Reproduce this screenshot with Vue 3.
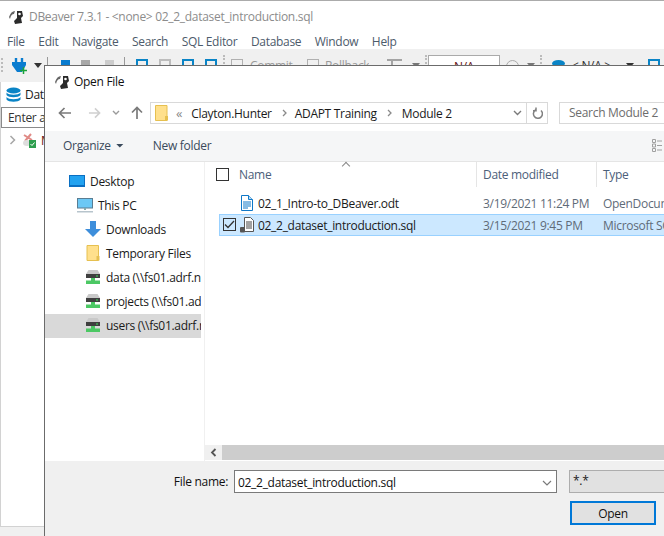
<script setup>
const menus = ['File', 'Edit', 'Navigate', 'Search', 'SQL Editor', 'Database', 'Window', 'Help']

// toolbar items after the connection plug, gap = space before the item
const tools = [
  { kind: 'caret', gap: 6 },
  { kind: 'sep', gap: 5 },
  { kind: 'plug blue', gap: 13 },
  { kind: 'plug grey', gap: 11 },
  { kind: 'plug pale', gap: 15 },
  { kind: 'sep', gap: 10 },
  { kind: 'sheet blue', gap: 11 },
  { kind: 'sheet grey', gap: 11 },
  { kind: 'sheet blue', gap: 11 },
  { kind: 'sheet blue', gap: 11 },
  { kind: 'grip', gap: 6 },
  { kind: 'sheet thin', gap: 6 },
  { kind: 'label commit', gap: 7, text: 'Commit' },
  { kind: 'sheet thin', gap: 13 },
  { kind: 'label rollback', gap: 6, text: 'Rollback' },
  { kind: 'type-t', gap: 18 },
  { kind: 'caret grey', gap: 10 },
  { kind: 'grip', gap: 5 },
  { kind: 'na-box', gap: 1, text: 'N/A' },
  { kind: 'clock', gap: 6 },
  { kind: 'caret grey', gap: 8 },
  { kind: 'grip', gap: 5 },
  { kind: 'db-dot', gap: 10 },
  { kind: 'tool-na', gap: 7, text: '< N/A >' },
  { kind: 'caret', gap: 14 },
  { kind: 'sheet blue', gap: 14 }
]

const places = [
  { label: 'Desktop', icon: 'desktop', indent: 24 },
  { label: 'This PC', icon: 'pc', indent: 32 },
  { label: 'Downloads', icon: 'download', indent: 40 },
  { label: 'Temporary Files', icon: 'folder', indent: 40 },
  { label: 'data (\\\\fs01.adrf.net)', icon: 'drive', indent: 40 },
  { label: 'projects (\\\\fs01.adrf.net)', icon: 'drive', indent: 40 },
  { label: 'users (\\\\fs01.adrf.net)', icon: 'drive', indent: 40, active: true }
]

const files = [
  { name: '02_1_Intro-to_DBeaver.odt', date: '3/19/2021 11:24 PM', type: 'OpenDocument Text', icon: 'odt' },
  { name: '02_2_dataset_introduction.sql', date: '3/15/2021 9:45 PM', type: 'Microsoft SQL Server', icon: 'sql', selected: true }
]
</script>

<template>
  <div class="screen">
    <!-- main window behind the dialog -->
    <div class="titlebar">
      <svg class="beaver" width="16" height="16" viewBox="0 0 16 16">
        <path d="M1 8 Q3 2 7 2 L6 5 Q3 5 2 10Z" fill="#666" />
        <path d="M9 2 L14 2 L15 7 L13 9 L14 14 L7 15 L6 12 L9 9Z" fill="#2b2b2b" />
        <circle cx="11.500" cy="5" r="1.300" fill="#fff" />
      </svg>
      <span>DBeaver 7.3.1 - &lt;none&gt; 02_2_dataset_introduction.sql</span>
    </div>
    <div class="menubar">
      <span v-for="m in menus" :key="m">{{ m }}</span>
    </div>
    <div class="toolbar">
      <span class="grip first"></span>
      <svg class="tool-plug" width="16" height="16" viewBox="0 0 16 16">
        <path d="M4 0v5M10 0v5" stroke="#0a7ccf" stroke-width="2.400" />
        <path d="M0 4h14v3l-4 7H5L0 7z" fill="#0a7ccf" />
        <path d="M11.500 9v7M8 12.500h7" stroke="#1aa33a" stroke-width="1.500" />
      </svg>
      <span
        v-for="(t, i) in tools"
        :key="i"
        class="tool"
        :class="t.kind"
        :style="{ marginLeft: t.gap + 'px' }"
      >{{ t.text }}</span>
    </div>
    <div class="workspace">
      <aside class="db-panel">
        <div class="db-tab">
          <svg width="15" height="16" viewBox="0 0 15 16">
            <ellipse cx="7.500" cy="3.500" rx="7" ry="3" fill="#0a84c6" />
            <path d="M.5 5.500c2 3 12 3 14 0v2.500c-2 3-12 3-14 0zM.5 10c2 3 12 3 14 0v2.500c-2 3-12 3-14 0z" fill="#0a84c6" />
          </svg>
          <span>Databases</span>
        </div>
        <div class="db-filter">Enter a part of name</div>
        <div class="db-node">
          <svg width="8" height="10" viewBox="0 0 8 10"><path d="M1.500 1l4 4-4 4" fill="none" stroke="#a6a6a6" stroke-width="1.500" /></svg>
          <svg width="14" height="15" viewBox="0 0 14 15">
            <path d="M2 2l8 5M9 1L3 8" stroke="#e08a86" stroke-width="2" />
            <ellipse cx="5" cy="10" rx="4" ry="3" fill="#ddd" />
            <rect x="7" y="7" width="7" height="8" fill="#2e9e4f" />
            <path d="M8.500 11l1.500 1.500 2.500-3" fill="none" stroke="#fff" />
          </svg>
          <span>MySQL</span>
        </div>
      </aside>
    </div>

    <!-- Open File dialog -->
    <section class="dialog">
      <header class="dlg-title">
        <svg width="16" height="16" viewBox="0 0 16 16">
          <path d="M1 8 Q3 2 7 2 L6 5 Q3 5 2 10Z" fill="#666" />
          <path d="M9 2 L14 2 L15 7 L13 9 L14 14 L7 15 L6 12 L9 9Z" fill="#2b2b2b" />
          <circle cx="11.500" cy="5" r="1.300" fill="#fff" />
        </svg>
        <span>Open File</span>
      </header>

      <div class="nav-row">
        <svg class="nav-arrow" width="14" height="12" viewBox="0 0 14 12"><path d="M13 6H2M6.500 1L1.500 6l5 5" fill="none" stroke="#7a7a7a" stroke-width="1.700" /></svg>
        <svg class="nav-arrow fwd" width="14" height="12" viewBox="0 0 14 12"><path d="M1 6h11M7.500 1l5 5-5 5" fill="none" stroke="#cfcfcf" stroke-width="1.700" /></svg>
        <svg class="nav-down" width="8" height="6" viewBox="0 0 8 6"><path d="M1 1l3 3 3-3" fill="none" stroke="#9a9a9a" stroke-width="1.400" /></svg>
        <svg class="nav-arrow up" width="12" height="14" viewBox="0 0 12 14"><path d="M6 13V2M1 6.500l5-5 5 5" fill="none" stroke="#7a7a7a" stroke-width="1.700" /></svg>
        <div class="address">
          <svg class="addr-folder" width="13" height="16" viewBox="0 0 13 16"><path d="M.5.500h11.500v15H.5z" fill="#ffe08c" stroke="#e6c050" /><path d="M10 11h3v4.500h-3z" fill="#e6c050" /></svg>
          <span class="chev-dbl">«</span>
          <span class="crumb-text">Clayton.Hunter</span>
          <svg class="crumb" width="6" height="8" viewBox="0 0 6 8"><path d="M1 1l3 3-3 3" fill="none" stroke="#8a8a8a" stroke-width="1.300" /></svg>
          <span class="crumb-text">ADAPT Training</span>
          <svg class="crumb last" width="6" height="8" viewBox="0 0 6 8"><path d="M1 1l3 3-3 3" fill="none" stroke="#8a8a8a" stroke-width="1.300" /></svg>
          <span class="crumb-text">Module 2</span>
          <svg class="addr-down" width="9" height="6" viewBox="0 0 9 6"><path d="M1 1l3.500 3.500L8 1" fill="none" stroke="#7a7a7a" stroke-width="1.400" /></svg>
          <span class="refresh">
            <svg width="11" height="12" viewBox="0 0 11 12"><path d="M3 2.500A4.500 4.500 0 1 0 8.500 3M3.500 0v3.300H0.500" fill="none" stroke="#808080" stroke-width="1.500" transform="translate(.5 .5)" /></svg>
          </span>
        </div>
        <div class="search">Search Module 2</div>
      </div>

      <div class="cmd-bar">
        <span class="organize">Organize</span>
        <span class="org-caret"></span>
        <span class="new-folder">New folder</span>
        <svg class="view-icon" width="10" height="13" viewBox="0 0 10 13"><path d="M.5.500h3v3h-3zM.5 5h3v3h-3zM.5 9.500h3v3h-3z" fill="none" stroke="#a0a0a0" /><path d="M5 2h5M5 6.500h5M5 11h5" stroke="#a0a0a0" /></svg>
      </div>

      <div class="browser">
        <nav class="places">
          <div v-for="p in places" :key="p.label" class="place" :class="{ active: p.active }" :style="{ paddingLeft: p.indent + 'px' }">
            <svg v-if="p.icon === 'desktop'" width="16" height="12" viewBox="0 0 16 12"><rect width="16" height="12" fill="#0a6fc2" /><rect x="1" y="1" width="14" height="9" fill="#22a2f0" /></svg>
            <svg v-else-if="p.icon === 'pc'" width="16" height="15" viewBox="0 0 16 15"><rect x=".5" y=".5" width="15" height="9.500" fill="#6cc8f5" stroke="#5a7d92" /><path d="M7 10h2v2H7z" fill="#8aa" /><path d="M0 13h16v1.500H0z" fill="#b7c4cc" /></svg>
            <svg v-else-if="p.icon === 'download'" width="16" height="16" viewBox="0 0 16 16"><path d="M5 0h6v8h5l-8 8-8-8h5z" fill="#3d8edb" /></svg>
            <svg v-else-if="p.icon === 'folder'" width="13" height="16" viewBox="0 0 13 16"><path d="M.5.500h11.500v15H.5z" fill="#ffe08c" stroke="#e6c050" /><path d="M10 11h3v4.500h-3z" fill="#e6c050" /></svg>
            <svg v-else class="drive" width="14" height="14" viewBox="0 0 14 14"><path d="M2.500 0h9L14 4H0z" fill="#c9c9c9" /><rect y="4" width="14" height="4" fill="#3f3f3f" /><rect x="10" y="5.500" width="2" height="1" fill="#3fe05c" /><path d="M5 8h4v2.500h5V14H0v-3.500h5z" fill="#4cc864" /></svg>
            <span class="place-label">{{ p.label }}</span>
          </div>
        </nav>

        <div class="listing">
          <div class="list-head">
            <span class="sort-caret"></span>
            <span class="col-name"><i class="check"></i><b>Name</b></span>
            <span class="col-date"><b>Date modified</b></span>
            <span class="col-type"><b>Type</b></span>
          </div>
          <div class="rows">
            <div v-for="f in files" :key="f.name" class="file-row" :class="{ selected: f.selected }">
              <span class="cell-name">
                <i v-if="f.selected" class="check on">
                  <svg width="11" height="9" viewBox="0 0 11 9"><path d="M1 4.500l3 3 6-6.500" fill="none" stroke="#333" stroke-width="1.300" /></svg>
                </i>
                <svg v-if="f.icon === 'odt'" class="file-icon odt" width="12" height="16" viewBox="0 0 12 16"><path d="M.5.500h7l4 4v11H.5z" fill="#fff" stroke="#0f78c8" /><path d="M7.500.5v4h4" fill="#bcdcf4" stroke="#0f78c8" /><path d="M2 7h8M2 9h8M2 11h8M2 13h5" stroke="#0f78c8" /></svg>
                <svg v-else class="file-icon sql" width="14" height="16" viewBox="0 0 14 16"><path d="M4.500.500h6l3 3v11h-9z" fill="#fff" stroke="#555" /><path d="M6 5h6M6 7h6M6 9h6M6 11h6" stroke="#444" /><rect y="10" width="5" height="5.500" rx="1" fill="#555" /></svg>
                <span class="file-name">{{ f.name }}</span>
              </span>
              <span class="cell-date">{{ f.date }}</span>
              <span class="cell-type">{{ f.type }}</span>
            </div>
          </div>
          <div class="hscroll">
            <span class="hs-btn">
              <svg width="7" height="9" viewBox="0 0 7 9"><path d="M5.500 1L2 4.500 5.500 8" fill="none" stroke="#555" stroke-width="1.800" /></svg>
            </span>
            <span class="hs-thumb"></span>
          </div>
        </div>
      </div>

      <footer class="dlg-foot">
        <div class="foot-row">
          <label>File name:</label>
          <div class="name-input">
            <span>02_2_dataset_introduction.sql</span>
            <svg width="10" height="6" viewBox="0 0 10 6"><path d="M1 1l4 4 4-4" fill="none" stroke="#7a7a7a" stroke-width="1.200" /></svg>
          </div>
          <div class="filter-box">*.*</div>
        </div>
        <div class="foot-actions">
          <button class="open-btn">Open</button>
        </div>
      </footer>
    </section>
  </div>
</template>

<style>
html, body { margin: 0; overflow: hidden; }
</style>

<style scoped>
.screen {
  position: relative;
  width: 664px;
  height: 536px;
  overflow: hidden;
  background: #f0f0f0;
  font-family: "Open Sans", "Noto Sans", sans-serif;
  font-size: 12px;
  letter-spacing: -0.3px;
  color: #1a1a1a;
  box-sizing: border-box;
  border-top: 1px solid #ababab;
}

.titlebar {
  height: 31px;
  background: #fff;
  display: flex;
  align-items: center;
  gap: 5px;
  padding-left: 8px;
  color: #8c8c8c;
}

.menubar {
  height: 17px;
  padding-top: 1px;
  margin-bottom: -1px;
  background: #fff;
  display: flex;
  align-items: center;
  gap: 13.500px;
  padding-left: 7px;
  color: #4d5b6b;
}

.toolbar {
  height: 33px;
  background: #f0f0f0;
  display: flex;
  align-items: flex-start;
  padding-left: 1px;
  overflow: hidden;
  white-space: nowrap;
  color: #9a9a9a;
}

.tool { flex: none; display: block; box-sizing: border-box; }

.grip {
  flex: none;
  width: 2px;
  height: 9px;
  margin-top: 6px;
  border-left: 2px dotted #bbb;
}
.grip.first { height: 14px; margin-top: 9px; }

.tool-plug { flex: none; margin: 9px 0 0 7px; }

.caret {
  width: 8px;
  height: 5px;
  margin-top: 14px;
  background: #333;
  clip-path: polygon(0 0, 100% 0, 50% 100%);
}
.caret.grey { background: #777; }

.sep { width: 1px; height: 24px; margin-top: 8px; background: #999; }

.plug { width: 9px; height: 13px; margin-top: 11px; border-radius: 0 0 4px 4px; }
.plug.blue { background: #0a7ccf; }
.plug.grey { background: #a8a8a8; }
.plug.pale { background: #ccc; }

.sheet { width: 12px; height: 14px; margin-top: 10px; border: 2px solid; }
.sheet.blue { border-color: #0a84c6; }
.sheet.grey { border-color: #bdbdbd; }
.sheet.thin { border: 1px solid #b0b0b0; }

.label { margin-top: 9px; width: 44px; line-height: 16px; overflow: hidden; }

.type-t { position: relative; width: 15px; height: 14px; margin-top: 10px; border-top: 2px solid #a4a4a4; }
.type-t::before { content: ""; position: absolute; left: 4px; top: 0; width: 2px; height: 12px; background: #a4a4a4; }

.na-box {
  width: 72px;
  height: 24px;
  margin-top: 6px;
  background: #fff;
  border: 1px solid #aaa;
  text-align: center;
  color: #611;
  line-height: 22px;
}

.clock { width: 13px; height: 13px; margin-top: 11px; border: 1px solid #aaa; border-radius: 50%; }
.db-dot { width: 13px; height: 7px; margin-top: 11px; background: #0a84c6; border-radius: 50%; }
.tool-na { width: 40px; margin-top: 9px; color: #333; line-height: 16px; }

.workspace { height: 454px; display: flex; }

.db-panel {
  width: 44px;
  height: 445px;
  background: #fff;
  border-left: 1px solid #d2d2d2;
  border-bottom: 1px solid #d2d2d2;
  box-sizing: border-box;
  overflow: hidden;
  white-space: nowrap;
}

.db-tab {
  height: 25px;
  display: flex;
  align-items: center;
  gap: 4px;
  padding-left: 5px;
  color: #1a1a1a;
}
.db-tab svg { flex: none; }

.db-filter {
  height: 21px;
  width: 90px;
  border: 1px solid #8a8a8a;
  box-sizing: border-box;
  line-height: 19px;
  padding-left: 6px;
  color: #333;
}

.db-node {
  height: 24px;
  display: flex;
  align-items: center;
  gap: 5px;
  padding-left: 8px;
  color: #611;
}
.db-node svg { flex: none; }

.dialog {
  position: absolute;
  left: 44px;
  top: 64px;
  right: 0;
  bottom: 0;
  background: #fff;
  border-left: 1px solid #6b6b6b;
  border-top: 1px solid #6b6b6b;
  display: flex;
  flex-direction: column;
}

.dlg-title {
  height: 31px;
  flex: none;
  display: flex;
  align-items: center;
  gap: 4px;
  padding-left: 9px;
  color: #111;
}

.nav-row {
  height: 34px;
  padding-bottom: 2px;
  box-sizing: border-box;
  flex: none;
  display: flex;
  align-items: center;
}

.nav-arrow { flex: none; margin-left: 13px; }
.nav-arrow.fwd { margin-left: 16px; width: 13px; }
.nav-down { flex: none; margin-left: 11px; }
.nav-arrow.up { margin-left: 11px; }

.address {
  flex: none;
  width: 398px;
  height: 22px;
  margin-left: 7px;
  border: 1px solid #d9d9d9;
  box-sizing: border-box;
  display: flex;
  align-items: center;
  padding-left: 4px;
  color: #1a1a1a;
}

.addr-folder { flex: none; }
.chev-dbl { color: #888; margin: 0 9px 0 8px; font-size: 13px; }
.crumb { flex: none; margin: 0 7px 0 10px; }
.crumb.last { margin-right: 9px; }
.addr-down { flex: none; margin-left: auto; margin-right: 4px; }

.refresh {
  flex: none;
  width: 20px;
  height: 100%;
  border-left: 1px solid #d9d9d9;
  display: flex;
  align-items: center;
  justify-content: center;
}

.search {
  flex: none;
  width: 110px;
  height: 22px;
  margin-left: 11px;
  border: 1px solid #d9d9d9;
  box-sizing: border-box;
  padding-left: 9px;
  line-height: 20px;
  color: #6d6d6d;
  white-space: nowrap;
  overflow: hidden;
}

.cmd-bar {
  height: 31px;
  padding-bottom: 1px;
  flex: none;
  background: #f5f6f7;
  border-bottom: 1px solid #e5e5e5;
  box-sizing: border-box;
  display: flex;
  align-items: center;
  padding-left: 18px;
  color: #3a4a5c;
}

.org-caret {
  flex: none;
  width: 8px;
  height: 4px;
  margin-left: 5px;
  background: #3a4a5c;
  clip-path: polygon(0 0, 100% 0, 50% 100%);
}

.new-folder { margin-left: 29px; }
.view-icon { margin-left: auto; margin-right: 2px; }

.browser { flex: 1; display: flex; min-height: 0; }

.places {
  flex: none;
  width: 159px;
  padding-top: 8px;
  overflow: hidden;
  box-sizing: border-box;
}

.place {
  height: 24px;
  width: 156px;
  padding-bottom: 2px;
  box-sizing: border-box;
  display: flex;
  align-items: center;
  white-space: nowrap;
  overflow: hidden;
  color: #1a1a1a;
}
.place svg { flex: none; width: 16px; }
.place svg.drive { width: 14px; margin: 0 1px 0 1px; }
.place-label { margin-left: 5px; }
.place.active { background: #d9d9d9; }

.listing {
  flex: 1;
  min-width: 0;
  display: flex;
  flex-direction: column;
  position: relative;
  border-left: 1px solid #f0f0f0;
}

.list-head {
  height: 25px;
  flex: none;
  display: flex;
  box-sizing: border-box;
  color: #4c607a;
}

.list-head b { font-weight: 400; }

.sort-caret {
  position: absolute;
  left: 138px;
  top: 1px;
  width: 5px;
  height: 5px;
  border-left: 1px solid #888;
  border-top: 1px solid #888;
  transform: rotate(45deg);
}

.col-name {
  width: 272px;
  flex: none;
  display: flex;
  align-items: center;
  gap: 10px;
  padding-left: 11px;
  box-sizing: border-box;
  border-right: 1px solid #e5e5e5;
}

.col-date {
  width: 120px;
  flex: none;
  display: flex;
  align-items: center;
  padding-left: 6px;
  box-sizing: border-box;
  border-right: 1px solid #e5e5e5;
}

.col-type {
  flex: none;
  display: flex;
  align-items: center;
  padding-left: 6px;
  white-space: nowrap;
}

.check {
  flex: none;
  width: 13px;
  height: 13px;
  border: 1px solid #333;
  box-sizing: border-box;
  display: flex;
  align-items: center;
  justify-content: center;
}
.check.on { position: absolute; left: 3px; top: 3px; background: transparent; }

.rows {
  flex: 1;
  padding-top: 5px;
  box-sizing: border-box;
}

.file-row {
  height: 22px;
  display: flex;
  align-items: center;
  position: relative;
  margin-left: 14px;
  white-space: nowrap;
  overflow: hidden;
  box-sizing: border-box;
}
.file-row.selected {
  background: #cce8ff;
  border: 1px solid #99d1ff;
  border-right: 0;
}

.cell-name {
  width: 257px;
  flex: none;
  display: flex;
  align-items: center;
  padding-left: 21px;
  box-sizing: border-box;
}
.selected .cell-name { padding-left: 20px; }

.file-icon { flex: none; width: 14px; }
.file-icon.odt { width: 12px; margin: 0 1px; }
.file-name { margin-left: 4px; color: #1a1a1a; }

.cell-date { width: 120px; flex: none; padding-left: 7px; box-sizing: border-box; color: #5f6b78; }
.cell-type { flex: none; padding-left: 7px; color: #5f6b78; }
.selected .cell-date { padding-left: 6px; }
.selected .cell-type { padding-left: 6px; }

.hscroll {
  height: 15px;
  flex: none;
  display: flex;
  margin-bottom: 1px;
  background: #f0f0f0;
}
.hs-btn {
  width: 17px;
  flex: none;
  display: flex;
  align-items: center;
  justify-content: center;
}
.hs-thumb { flex: 1; background: #cdcdcd; }

.dlg-foot {
  height: 75px;
  flex: none;
  background: #f0f0f0;
  box-sizing: border-box;
  padding-top: 9px;
}

.foot-row { display: flex; align-items: flex-start; }

.foot-row label {
  width: 183px;
  flex: none;
  text-align: right;
  line-height: 24px;
  color: #111;
  white-space: nowrap;
}

.name-input {
  flex: none;
  width: 323px;
  height: 23px;
  margin-left: 6px;
  background: #fff;
  border: 1px solid #7a7a7a;
  box-sizing: border-box;
  display: flex;
  align-items: center;
  justify-content: space-between;
  padding: 2px 4px 0 3px;
  color: #111;
}

.filter-box {
  flex: none;
  width: 96px;
  height: 23px;
  margin-left: 12px;
  background: #e1e1e1;
  border: 1px solid #adadad;
  box-sizing: border-box;
  padding-left: 3px;
  line-height: 20px;
}

.foot-actions {
  display: flex;
  justify-content: flex-end;
  padding: 7px 8px 0 0;
}

.open-btn {
  width: 86px;
  height: 24px;
  background: #e1e1e1;
  border: 2px solid #0078d7;
  box-sizing: border-box;
  font: inherit;
  letter-spacing: inherit;
  color: #111;
  padding: 0;
}
</style>
